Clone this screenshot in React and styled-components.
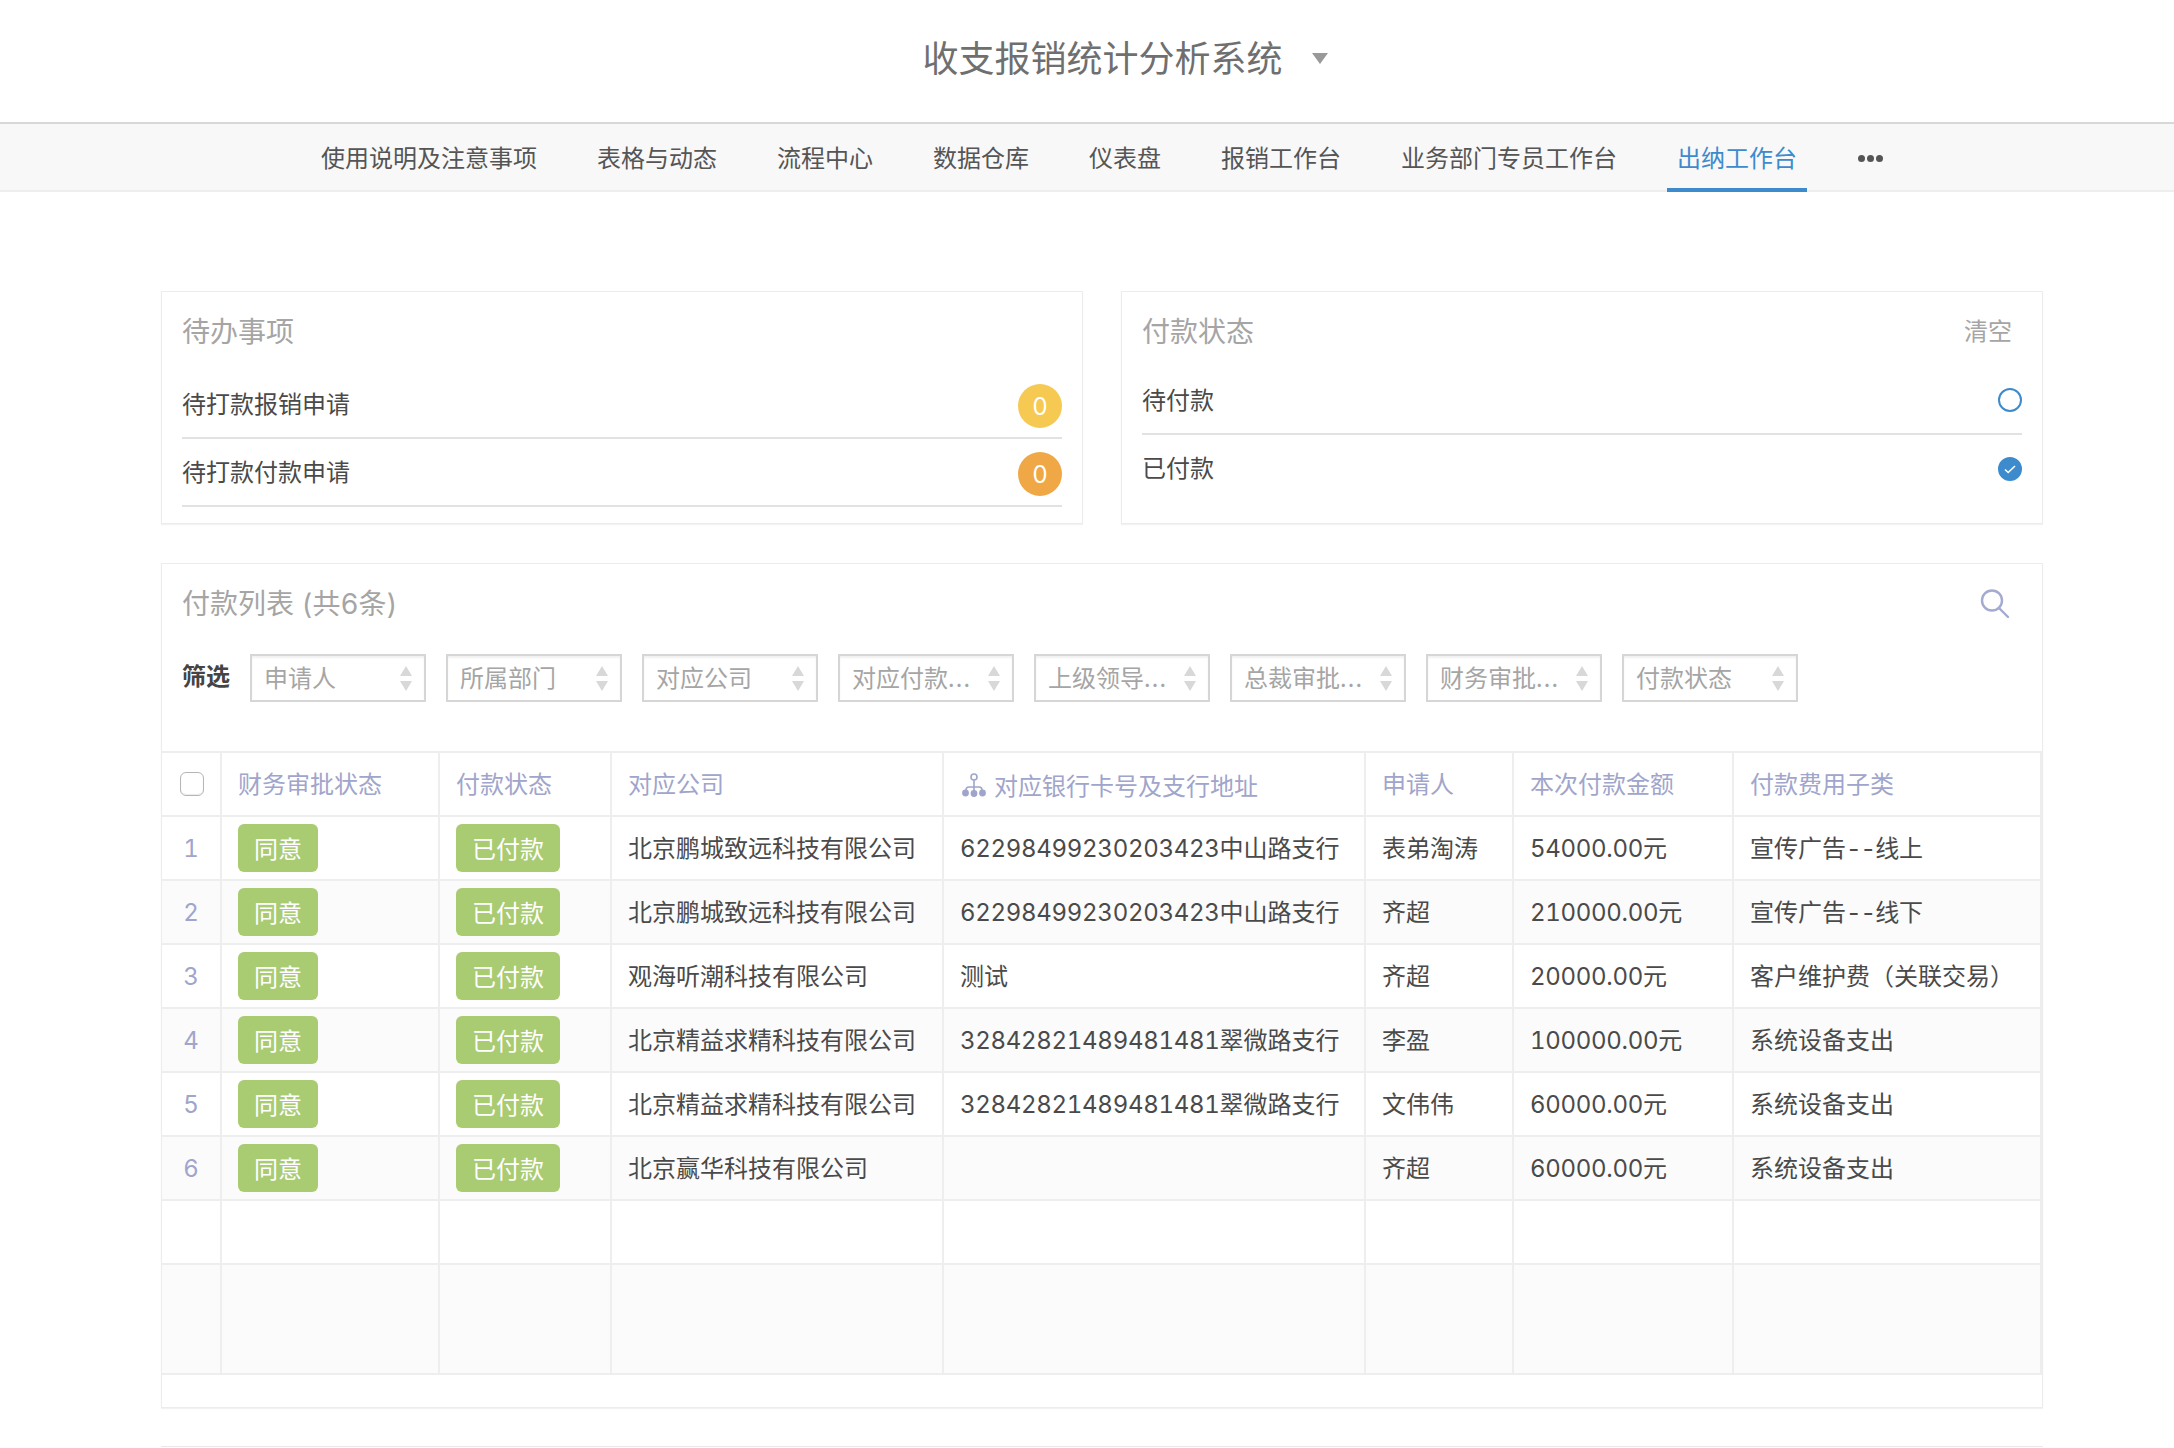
import React from "react";
import styled, { createGlobalStyle } from "styled-components";

const FONT = `"Inter", "Noto Sans CJK SC", "Liberation Sans", sans-serif`;

const Global = createGlobalStyle`
  html, body { margin: 0; padding: 0; background: #fff; overflow: hidden; }
  body { font-family: ${FONT}; font-size: 24px; color: #4a4a4a; font-feature-settings: "tnum" 1; }
  * { box-sizing: border-box; }
`;

const Page = styled.div`
  width: 2174px;
  height: 1448px;
  overflow: hidden;
`;

const Header = styled.header`
  height: 124px;
  border-bottom: 2px solid #d8d8d8;
  padding-left: 76px;
  padding-bottom: 5px;
  display: flex;
  align-items: center;
  justify-content: center;
  gap: 29px;
`;

const AppTitle = styled.div`
  font-size: 36px;
  color: #6f6f6f;
  line-height: 48px;
`;

const Caret = styled.span`
  width: 0;
  height: 0;
  margin-bottom: 1px;
  border-left: 8.5px solid transparent;
  border-right: 8.5px solid transparent;
  border-top: 11px solid #999;
`;

const Nav = styled.nav`
  height: 68px;
  background: #f8f8f8;
  border-bottom: 2px solid #eee;
  padding-left: 311px;
  display: flex;
  gap: 40px;
`;

const NavItem = styled.a`
  height: 68px;
  padding: 1px 10px 0;
  display: flex;
  align-items: center;
  color: ${(p) => (p.$active ? "#3d8bcd" : "#555")};
  border-bottom: 4px solid ${(p) => (p.$active ? "#3d8bcd" : "transparent")};
`;

const Dots = styled.span`
  display: flex;
  gap: 2px;
  margin: 3px 0 0 1px;
  & > i { width: 7px; height: 7px; border-radius: 50%; background: #555; display: block; }
`;

const Main = styled.main`
  padding: 99px 0 0 161px;
  width: 2043px;
`;

const TopGrid = styled.div`
  display: grid;
  grid-template-columns: 922px 922px;
  gap: 38px;
`;

const Card = styled.section`
  height: ${(p) => p.$h}px;
  background: #fff;
  border: 1px solid #ececec;
  box-shadow: 0 1px 1px rgba(0, 0, 0, 0.05);
  display: flex;
  flex-direction: column;
`;

const CardTitle = styled.div`
  height: ${(p) => p.$h}px;
  padding: 0 ${(p) => p.$pr || 20}px 0 20px;
  display: flex;
  justify-content: space-between;
  align-items: flex-start;
  font-size: 28px;
  line-height: 80px;
  color: #a5a5a5;
`;

const ClearLink = styled.span`
  font-size: 24px;
  color: #a5a5a5;
`;

const Rows = styled.div`
  padding: 0 20px;
`;

const Row = styled.div`
  height: 68px;
  display: flex;
  align-items: center;
  justify-content: space-between;
  border-bottom: ${(p) => (p.$plain ? "none" : "2px solid #e2e2e2")};
`;

const RowLabel = styled.span`
  margin-bottom: ${(p) => p.$lift}px;
`;

const Badge = styled.span`
  width: 44px;
  height: 44px;
  margin-top: 3px;
  padding-top: 1px;
  border-radius: 50%;
  background: ${(p) => p.$color};
  color: #fff;
  display: flex;
  align-items: center;
  justify-content: center;
  font-size: 24px;
`;

const Radio = styled.span`
  width: 24px;
  height: 24px;
  border-radius: 50%;
  border: 2px solid #3d8bcd;
  background: ${(p) => (p.$on ? "#3d8bcd" : "#fff")};
  display: flex;
  align-items: center;
  justify-content: center;
`;

const ListCard = styled(Card)`
  margin-top: 39px;
`;

const ListHead = styled.div`
  height: 82px;
  padding: 0 32px 0 20px;
  display: flex;
  justify-content: space-between;
  align-items: center;
  font-size: 28px;
  color: #a5a5a5;
`;

const ListTitle = styled.span`
  margin-bottom: 6px;
`;

const SearchWrap = styled.span`
  display: flex;
  margin-bottom: 3px;
`;

const FilterBar = styled.div`
  height: 105px;
  padding: 8px 20px 0;
  display: flex;
  align-items: flex-start;
  gap: 20px;
`;

const FilterLabel = styled.b`
  width: 48px;
  line-height: 46px;
  font-weight: 700;
  color: #444;
`;

const Select = styled.div`
  width: 176px;
  height: 48px;
  border: 2px solid #d6d6d6;
  box-shadow: inset 0 2px 2px rgba(0, 0, 0, 0.06);
  padding: 0 12px;
  display: flex;
  align-items: center;
  justify-content: space-between;
  color: #a5a5a5;
  white-space: nowrap;
`;

const SelectText = styled.span`
  margin-bottom: 3px;
`;

const Ellipsis = styled.span`
  letter-spacing: 1.3px;
`;

const Arrows = styled.span`
  display: flex;
  flex-direction: column;
  gap: 5px;
  &::before, &::after {
    content: "";
    width: 0;
    height: 0;
    border-left: 6px solid transparent;
    border-right: 6px solid transparent;
  }
  &::before { border-bottom: 10px solid #d8d8d8; }
  &::after { border-top: 10px solid #d8d8d8; }
`;

const Table = styled.table`
  width: 1880px;
  table-layout: fixed;
  border-collapse: separate;
  border-spacing: 0;
  border-top: 2px solid #eee;
`;

const Th = styled.th`
  height: 64px;
  padding: 0 0 ${(p) => (p.$low ? 0 : 3)}px ${(p) => (p.$center ? 0 : 16)}px;
  font-weight: 400;
  text-align: ${(p) => (p.$center ? "center" : "left")};
  color: #9fa5cb;
  border-right: 2px solid #eee;
  border-bottom: 2px solid #eee;
  white-space: nowrap;
`;

const Tr = styled.tr`
  background: ${(p) => (p.$alt ? "#fbfbfb" : "#fff")};
`;

const Td = styled.td`
  height: ${(p) => p.$h || 64}px;
  padding: 0 0 ${(p) => (p.$text ? 3 : 0)}px ${(p) => (p.$center ? 0 : 16)}px;
  text-align: ${(p) => (p.$center ? "center" : "left")};
  color: ${(p) => (p.$center ? "#9fa5cb" : "#4a4a4a")};
  border-right: 2px solid #eee;
  border-bottom: 2px solid #eee;
  white-space: nowrap;
  font-size: 24px;
`;

const Num = styled.span`
  letter-spacing: ${(p) => (p.$dash ? -1 : -0.3)}px;
`;

const Tag = styled.span`
  display: inline-flex;
  align-items: center;
  height: 48px;
  padding: 0 16px 2px;
  border-radius: 6px;
  background: #a9cb72;
  color: #fff;
  vertical-align: middle;
`;

const Check = styled.span`
  display: inline-block;
  width: 24px;
  height: 24px;
  margin-left: 2px;
  border-radius: 6px;
  border: 1px solid #b5b5b5;
  box-shadow: inset 0 -1px 1px rgba(0, 0, 0, 0.08);
  vertical-align: middle;
`;

const TreeIcon = styled.svg`
  width: 24px;
  height: 24px;
  margin: 0 8px 0 2px;
  vertical-align: -2px;
`;

const FootRule = styled.div`
  height: 1px;
  margin-top: 38px;
  background: #e8e8e8;
`;

const SearchIcon = () => (
  <svg width="30" height="30" viewBox="0 0 30 30" fill="none" stroke="#a5abd0" strokeWidth="2.4">
    <circle cx="12" cy="11.5" r="10" />
    <line x1="19" y1="19" x2="28" y2="28" strokeLinecap="round" />
  </svg>
);

const Tree = () => (
  <TreeIcon viewBox="0 0 24 24" fill="none" stroke="#9fa5cb" strokeWidth="1.6">
    <circle cx="12" cy="4" r="3" />
    <path d="M12 7v14M4 20v-3q0-3 3-3h10q3 0 3 3v3" />
    <circle cx="3.5" cy="20" r="2.6" fill="#9fa5cb" />
    <circle cx="12" cy="20.5" r="2.6" fill="#9fa5cb" />
    <circle cx="20.5" cy="20" r="2.6" fill="#9fa5cb" />
  </TreeIcon>
);

const NAV = ["使用说明及注意事项", "表格与动态", "流程中心", "数据仓库", "仪表盘", "报销工作台", "业务部门专员工作台"];
const FILTERS = [
  { label: "申请人" },
  { label: "所属部门" },
  { label: "对应公司" },
  { label: "对应付款", more: true },
  { label: "上级领导", more: true },
  { label: "总裁审批", more: true },
  { label: "财务审批", more: true },
  { label: "付款状态" },
];
const COLS = [60, 218, 172, 332, 422, 148, 220, 308];
const DATA = [
  ["北京鹏城致远科技有限公司", "62298499230203423中山路支行", "表弟淘涛", "54000.00元", "宣传广告--线上"],
  ["北京鹏城致远科技有限公司", "62298499230203423中山路支行", "齐超", "210000.00元", "宣传广告--线下"],
  ["观海听潮科技有限公司", "测试", "齐超", "20000.00元", "客户维护费（关联交易）"],
  ["北京精益求精科技有限公司", "32842821489481481翠微路支行", "李盈", "100000.00元", "系统设备支出"],
  ["北京精益求精科技有限公司", "32842821489481481翠微路支行", "文伟伟", "60000.00元", "系统设备支出"],
  ["北京赢华科技有限公司", "", "齐超", "60000.00元", "系统设备支出"],
];

const withNums = (text) =>
  text.split(/([0-9.]+|-+)/).map((part, i) =>
    /^[0-9.]+$/.test(part) ? (
      <Num key={i}>{part}</Num>
    ) : /^-+$/.test(part) ? (
      <Num key={i} $dash>
        {part}
      </Num>
    ) : (
      part
    )
  );

const EmptyRow = ({ alt, h }) => (
  <Tr $alt={alt}>
    {COLS.map((_, i) => (
      <Td key={i} $h={h} />
    ))}
  </Tr>
);

export default function App() {
  return (
    <Page>
      <Global />
      <Header>
        <AppTitle>收支报销统计分析系统</AppTitle>
        <Caret />
      </Header>
      <Nav>
        {NAV.map((n) => (
          <NavItem key={n}>{n}</NavItem>
        ))}
        <NavItem $active>出纳工作台</NavItem>
        <NavItem>
          <Dots>
            <i />
            <i />
            <i />
          </Dots>
        </NavItem>
      </Nav>
      <Main>
        <TopGrid>
          <Card $h={233}>
            <CardTitle $h={79}>待办事项</CardTitle>
            <Rows>
              <Row>
                <RowLabel $lift={3}>待打款报销申请</RowLabel>
                <Badge $color="#f5c952">0</Badge>
              </Row>
              <Row>
                <RowLabel $lift={3}>待打款付款申请</RowLabel>
                <Badge $color="#f0a745">0</Badge>
              </Row>
            </Rows>
          </Card>
          <Card $h={233}>
            <CardTitle $h={75} $pr={30}>
              付款状态
              <ClearLink>清空</ClearLink>
            </CardTitle>
            <Rows>
              <Row>
                <RowLabel $lift={4}>待付款</RowLabel>
                <Radio />
              </Row>
              <Row $plain>
                <RowLabel $lift={6}>已付款</RowLabel>
                <Radio $on>
                  <svg width="14" height="12" viewBox="0 0 14 12" fill="none" stroke="#fff" strokeWidth="1.6">
                    <path d="M2 6.5l3.2 3L12 3" />
                  </svg>
                </Radio>
              </Row>
            </Rows>
          </Card>
        </TopGrid>
        <ListCard $h={845}>
          <ListHead>
            <ListTitle>付款列表 (共6条)</ListTitle>
            <SearchWrap>
              <SearchIcon />
            </SearchWrap>
          </ListHead>
          <FilterBar>
            <FilterLabel>筛选</FilterLabel>
            {FILTERS.map((f) => (
              <Select key={f.label}>
                <SelectText>
                  {f.label}
                  {f.more && <Ellipsis>...</Ellipsis>}
                </SelectText>
                <Arrows />
              </Select>
            ))}
          </FilterBar>
          <Table>
            <colgroup>
              {COLS.map((w, i) => (
                <col key={i} width={w} />
              ))}
            </colgroup>
            <thead>
              <tr>
                <Th $center>
                  <Check />
                </Th>
                <Th>财务审批状态</Th>
                <Th>付款状态</Th>
                <Th>对应公司</Th>
                <Th $low>
                  <Tree />
                  对应银行卡号及支行地址
                </Th>
                <Th>申请人</Th>
                <Th>本次付款金额</Th>
                <Th>付款费用子类</Th>
              </tr>
            </thead>
            <tbody>
              {DATA.map((r, i) => (
                <Tr key={i} $alt={i % 2 === 1}>
                  <Td $center>{i + 1}</Td>
                  <Td>
                    <Tag>同意</Tag>
                  </Td>
                  <Td>
                    <Tag>已付款</Tag>
                  </Td>
                  {r.map((c, j) => (
                    <Td key={j} $text>
                      {withNums(c)}
                    </Td>
                  ))}
                </Tr>
              ))}
              <EmptyRow />
              <EmptyRow alt h={110} />
            </tbody>
          </Table>
        </ListCard>
        <FootRule />
      </Main>
    </Page>
  );
}
